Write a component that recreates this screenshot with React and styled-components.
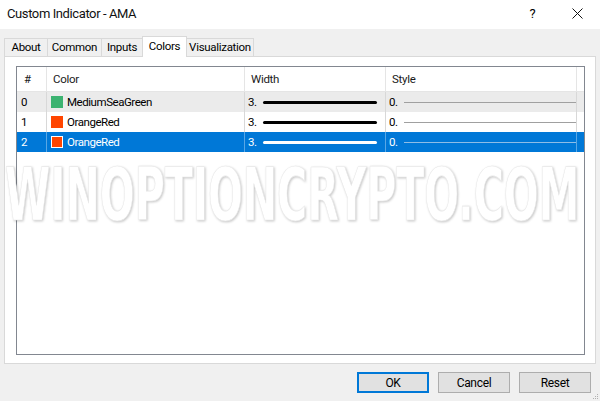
import React from "react";
import styled, { createGlobalStyle } from "styled-components";

const Global = createGlobalStyle`
  html, body { margin: 0; padding: 0; }
  body {
    width: 600px; height: 401px; overflow: hidden; background: #f0f0f0;
    font-family: Roboto, "Noto Sans", sans-serif; color: #000;
  }
`;

const Window = styled.div`
  position: relative;
  width: 600px;
  height: 401px;
  display: flex;
  flex-direction: column;
  background: #f0f0f0;
`;

const TitleBar = styled.div`
  height: 29px;
  background: #fff;
  display: flex;
  align-items: center;
  padding-left: 7px;
`;

const Title = styled.div`
  flex: 1;
  font-size: 13px;
  letter-spacing: -0.4px;
  padding-bottom: 2px;
  color: #111;
`;

const TitleButton = styled.div`
  width: 45px;
  height: 29px;
  display: flex;
  align-items: center;
  justify-content: center;
  font-size: 13px;
  padding-bottom: 2px;
  box-sizing: border-box;
`;

const Body = styled.div`
  padding: 7px 4px 0 4px;
  display: flex;
  flex-direction: column;
`;

const TabStrip = styled.div`
  display: flex;
  align-items: flex-end;
  height: 20px;
  position: relative;
  z-index: 1;
`;

const Tab = styled.div`
  box-sizing: border-box;
  width: ${(p) => p.$w}px;
  height: ${(p) => (p.$active ? 21 : 18)}px;
  margin-bottom: ${(p) => (p.$active ? -1 : 0)}px;
  margin-left: ${(p) => (p.$first ? 0 : -1)}px;
  border: 1px solid #d9d9d9;
  border-bottom: none;
  background: ${(p) => (p.$active ? "#fff" : "#f0f0f0")};
  font-size: 11.5px;
  letter-spacing: -0.3px;
  display: flex;
  align-items: center;
  justify-content: center;
  padding-bottom: ${(p) => (p.$active ? 3 : 1)}px;
  position: relative;
  z-index: ${(p) => (p.$active ? 2 : 1)};
`;

const Panel = styled.div`
  box-sizing: border-box;
  width: 592px;
  height: 308px;
  border: 1px solid #d9d9d9;
  background: #fff;
  padding: 9px 0 0 11px;
`;

const List = styled.div`
  box-sizing: border-box;
  width: 569px;
  height: 289px;
  border: 1px solid #828790;
  background: #fff;
  display: flex;
  flex-direction: column;
`;

const Header = styled.div`
  display: flex;
  height: 24px;
  border-bottom: 1px solid #e5e5e5;
`;

const HeaderCell = styled.div`
  box-sizing: border-box;
  width: ${(p) => p.$w}px;
  border-right: 1px solid #e5e5e5;
  padding-left: ${(p) => p.$pad || 6}px;
  font-size: 11.5px;
  letter-spacing: -0.3px;
  display: flex;
  align-items: center;
  color: #1a1a1a;
`;

const Row = styled.div`
  display: flex;
  height: 20px;
  background: ${(p) => (p.$selected ? "#0078d7" : p.$shaded ? "#ebebeb" : "#fff")};
  color: ${(p) => (p.$selected ? "#fff" : "#000")};
`;

const Cell = styled.div`
  box-sizing: border-box;
  width: ${(p) => p.$w}px;
  border-right: 1px solid ${(p) => (p.$selected ? "rgba(255,255,255,0.35)" : "#d8d8d8")};
  padding-left: ${(p) => p.$pad || 4}px;
  font-size: 11.5px;
  letter-spacing: -0.45px;
  display: flex;
  align-items: center;
`;

const Swatch = styled.span`
  box-sizing: border-box;
  width: 12px;
  height: 12px;
  margin-right: 4px;
  background: ${(p) => p.$color};
  border: 1px solid ${(p) => (p.$selected ? "#fff" : p.$color)};
  flex-shrink: 0;
`;

const WidthLine = styled.span`
  width: 114px;
  height: 3px;
  border-radius: 2px;
  margin-left: 6px;
  background: ${(p) => (p.$selected ? "#fff" : "#000")};
`;

const StyleLine = styled.span`
  width: 172px;
  height: 1px;
  margin-left: 6px;
  background: ${(p) => (p.$selected ? "#8fbde6" : "#a0a0a0")};
`;

const Footer = styled.div`
  display: flex;
  justify-content: flex-end;
  gap: 9px;
  padding: 8px 9px 0 0;
`;

const Button = styled.div`
  box-sizing: border-box;
  width: 72px;
  height: 21px;
  background: #e1e1e1;
  border: 1px solid ${(p) => (p.$default ? "#0078d7" : "#adadad")};
  box-shadow: ${(p) => (p.$default ? "inset 0 0 0 1px #0078d7" : "none")};
  font-size: 12px;
  letter-spacing: -0.3px;
  display: flex;
  align-items: center;
  justify-content: center;
`;

const Watermark = styled.svg`
  position: absolute;
  left: 0;
  top: 0;
  pointer-events: none;
  filter: drop-shadow(1px 1px 1.2px rgba(0, 0, 0, 0.22));
`;

const Grip = styled.svg`
  position: absolute;
  right: 1px;
  bottom: 1px;
`;

const cols = [30, 198, 141, 191];

const rows = [
  { n: "0", name: "MediumSeaGreen", color: "#3cb371" },
  { n: "1", name: "OrangeRed", color: "#ff4500" },
  { n: "2", name: "OrangeRed", color: "#ff4500", selected: true },
];

const tabs = [
  { label: "About", w: 44 },
  { label: "Common", w: 55 },
  { label: "Inputs", w: 42 },
  { label: "Colors", w: 45, active: true },
  { label: "Visualization", w: 68 },
];

export default function App() {
  return (
    <>
      <Global />
      <Window>
        <TitleBar>
          <Title>Custom Indicator - AMA</Title>
          <TitleButton>?</TitleButton>
          <TitleButton>
            <svg width="11" height="11" viewBox="0 0 11 11">
              <path d="M0.5 0.5 L10.5 10.5 M10.5 0.5 L0.5 10.5" stroke="#111" strokeWidth="1" />
            </svg>
          </TitleButton>
        </TitleBar>
        <Body>
          <TabStrip>
            {tabs.map((t, i) => (
              <Tab key={t.label} $w={t.w} $active={t.active} $first={i === 0}>
                {t.label}
              </Tab>
            ))}
          </TabStrip>
          <Panel>
            <List>
              <Header>
                <HeaderCell $w={cols[0]} $pad={7}>#</HeaderCell>
                <HeaderCell $w={cols[1]}>Color</HeaderCell>
                <HeaderCell $w={cols[2]}>Width</HeaderCell>
                <HeaderCell $w={cols[3]}>Style</HeaderCell>
              </Header>
              {rows.map((r, i) => (
                <Row key={i} $selected={r.selected} $shaded={i === 0}>
                  <Cell $w={cols[0]} $pad={4} $selected={r.selected}>{r.n}</Cell>
                  <Cell $w={cols[1]} $selected={r.selected}>
                    <Swatch $color={r.color} $selected={r.selected} />
                    {r.name}
                  </Cell>
                  <Cell $w={cols[2]} $pad={3} $selected={r.selected}>
                    3.
                    <WidthLine $selected={r.selected} />
                  </Cell>
                  <Cell $w={cols[3]} $pad={3} $selected={r.selected}>
                    0.
                    <StyleLine $selected={r.selected} />
                  </Cell>
                </Row>
              ))}
            </List>
          </Panel>
        </Body>
        <Footer>
          <Button $default>OK</Button>
          <Button>Cancel</Button>
          <Button>Reset</Button>
        </Footer>
        <Grip width="8" height="8" viewBox="0 0 8 8">
          {[
            [6, 2], [6, 4], [4, 4], [6, 6], [4, 6], [2, 6],
          ].map(([x, y], i) => (
            <rect key={i} x={x} y={y} width="1" height="1" fill="#b0b0b0" />
          ))}
        </Grip>
        <Watermark width="600" height="401" viewBox="0 0 600 401">
          <g transform="translate(5 220) scale(1 1.8)">
            <text
              x="0"
              y="0"
              fontFamily='"DejaVu Sans", sans-serif'
              fontWeight="bold"
              fontSize="41"
              fill="#ffffff"
              stroke="#e8e8e8"
              strokeWidth="0.4"
            >
              WINOPTIONCRYPTO.COM
            </text>
          </g>
        </Watermark>
      </Window>
    </>
  );
}
